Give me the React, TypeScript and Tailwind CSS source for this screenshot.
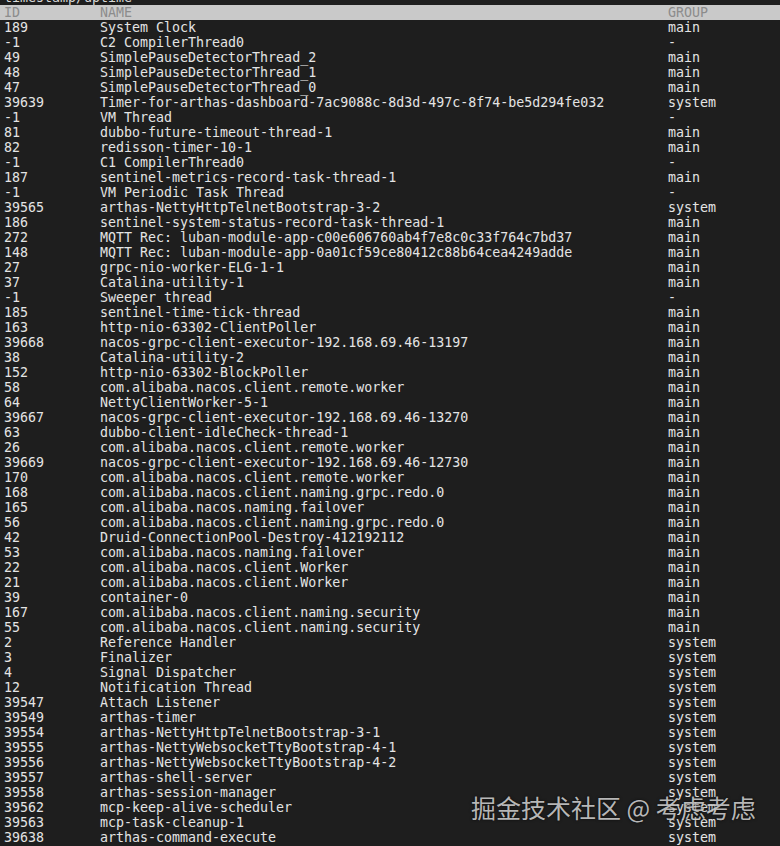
import React from 'react';

type Row = [string, string, string];

const rows: Row[] = [
  ['189', 'System Clock', 'main'],
  ['-1', 'C2 CompilerThread0', '-'],
  ['49', 'SimplePauseDetectorThread_2', 'main'],
  ['48', 'SimplePauseDetectorThread_1', 'main'],
  ['47', 'SimplePauseDetectorThread_0', 'main'],
  ['39639', 'Timer-for-arthas-dashboard-7ac9088c-8d3d-497c-8f74-be5d294fe032', 'system'],
  ['-1', 'VM Thread', '-'],
  ['81', 'dubbo-future-timeout-thread-1', 'main'],
  ['82', 'redisson-timer-10-1', 'main'],
  ['-1', 'C1 CompilerThread0', '-'],
  ['187', 'sentinel-metrics-record-task-thread-1', 'main'],
  ['-1', 'VM Periodic Task Thread', '-'],
  ['39565', 'arthas-NettyHttpTelnetBootstrap-3-2', 'system'],
  ['186', 'sentinel-system-status-record-task-thread-1', 'main'],
  ['272', 'MQTT Rec: luban-module-app-c00e606760ab4f7e8c0c33f764c7bd37', 'main'],
  ['148', 'MQTT Rec: luban-module-app-0a01cf59ce80412c88b64cea4249adde', 'main'],
  ['27', 'grpc-nio-worker-ELG-1-1', 'main'],
  ['37', 'Catalina-utility-1', 'main'],
  ['-1', 'Sweeper thread', '-'],
  ['185', 'sentinel-time-tick-thread', 'main'],
  ['163', 'http-nio-63302-ClientPoller', 'main'],
  ['39668', 'nacos-grpc-client-executor-192.168.69.46-13197', 'main'],
  ['38', 'Catalina-utility-2', 'main'],
  ['152', 'http-nio-63302-BlockPoller', 'main'],
  ['58', 'com.alibaba.nacos.client.remote.worker', 'main'],
  ['64', 'NettyClientWorker-5-1', 'main'],
  ['39667', 'nacos-grpc-client-executor-192.168.69.46-13270', 'main'],
  ['63', 'dubbo-client-idleCheck-thread-1', 'main'],
  ['26', 'com.alibaba.nacos.client.remote.worker', 'main'],
  ['39669', 'nacos-grpc-client-executor-192.168.69.46-12730', 'main'],
  ['170', 'com.alibaba.nacos.client.remote.worker', 'main'],
  ['168', 'com.alibaba.nacos.client.naming.grpc.redo.0', 'main'],
  ['165', 'com.alibaba.nacos.naming.failover', 'main'],
  ['56', 'com.alibaba.nacos.client.naming.grpc.redo.0', 'main'],
  ['42', 'Druid-ConnectionPool-Destroy-412192112', 'main'],
  ['53', 'com.alibaba.nacos.naming.failover', 'main'],
  ['22', 'com.alibaba.nacos.client.Worker', 'main'],
  ['21', 'com.alibaba.nacos.client.Worker', 'main'],
  ['39', 'container-0', 'main'],
  ['167', 'com.alibaba.nacos.client.naming.security', 'main'],
  ['55', 'com.alibaba.nacos.client.naming.security', 'main'],
  ['2', 'Reference Handler', 'system'],
  ['3', 'Finalizer', 'system'],
  ['4', 'Signal Dispatcher', 'system'],
  ['12', 'Notification Thread', 'system'],
  ['39547', 'Attach Listener', 'system'],
  ['39549', 'arthas-timer', 'system'],
  ['39554', 'arthas-NettyHttpTelnetBootstrap-3-1', 'system'],
  ['39555', 'arthas-NettyWebsocketTtyBootstrap-4-1', 'system'],
  ['39556', 'arthas-NettyWebsocketTtyBootstrap-4-2', 'system'],
  ['39557', 'arthas-shell-server', 'system'],
  ['39558', 'arthas-session-manager', 'system'],
  ['39562', 'mcp-keep-alive-scheduler', 'system'],
  ['39563', 'mcp-task-cleanup-1', 'system'],
  ['39638', 'arthas-command-execute', 'system'],
];

const ThreadRow = ({ row }: { row: Row }) => (
  <div className="flex h-[15px] px-[4px] whitespace-pre">
    <span className="w-[96px] shrink-0">{row[0]}</span>
    <span className="w-[568px] shrink-0">{row[1]}</span>
    <span>{row[2]}</span>
  </div>
);

export default function App() {
  return (
    <div className="relative w-[780px] h-[846px] overflow-hidden bg-[#1e1e1e] text-[#e4e4e4] text-[13.3px] leading-[15px] font-['DejaVu_Sans_Mono',monospace]">
      {/* scrolled-off line, only its bottom shows */}
      <div className="-mt-[10px] h-[15px] px-[4px] whitespace-pre text-[#d8d8d8]">timestamp/uptime</div>

      {/* header bar */}
      <div className="flex h-[15px] px-[4px] bg-[#c9c9c9] text-[#8c8c8c] whitespace-pre">
        <span className="w-[96px] shrink-0">ID</span>
        <span className="w-[568px] shrink-0">NAME</span>
        <span>GROUP</span>
      </div>

      {rows.map((row, i) => (
        <ThreadRow key={i} row={row} />
      ))}

      {/* watermark */}
      <div className="absolute left-[471px] top-[792px] text-[25px] leading-[30px] text-[#d6d6d6]/85 font-['Noto_Sans_CJK_SC',sans-serif] whitespace-pre [text-shadow:0_0_3px_rgba(0,0,0,0.7)]">
        掘金技术社区 @ 考虑考虑
      </div>
    </div>
  );
}
